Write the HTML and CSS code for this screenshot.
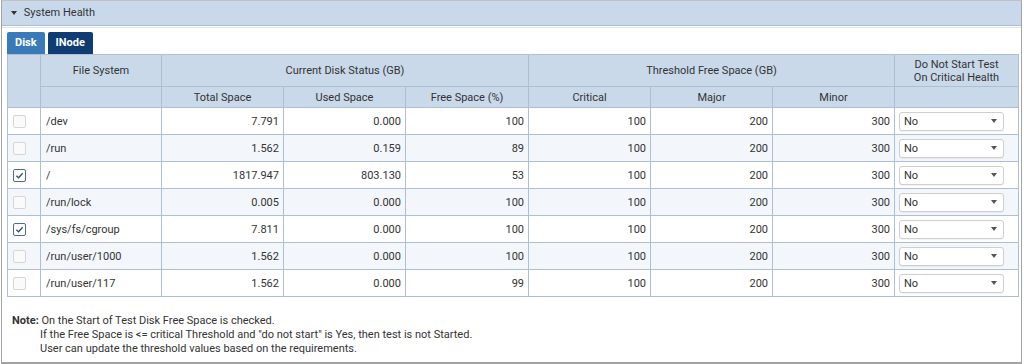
FILE: index.html
```html
<!DOCTYPE html>
<html lang="en">
<head>
  <meta charset="UTF-8">
  <title>System Health</title>
  <link rel="stylesheet" href="styles.css">
</head>
<body>

  <div class="panel">
    <div class="panel-head">
      <span class="caret"></span> System Health
    </div>

    <div class="panel-body">
      <div class="tabs">
        <div class="tab">Disk</div>
        <div class="tab activo">INode</div>
      </div>

      <table class="grid">
        <colgroup>
          <col style="width:33px">
          <col style="width:121px">
          <col style="width:122px">
          <col style="width:122px">
          <col style="width:123px">
          <col style="width:122px">
          <col style="width:122px">
          <col style="width:122px">
          <col style="width:124px">
        </colgroup>
        <thead>
          <tr class="fila-alta">
            <th rowspan="2"></th>
            <th>File System</th>
            <th colspan="3">Current Disk Status (GB)</th>
            <th colspan="3">Threshold Free Space (GB)</th>
            <th>Do Not Start Test<br>On Critical Health</th>
          </tr>
          <tr>
            <th></th>
            <th>Total Space</th>
            <th>Used Space</th>
            <th>Free Space (%)</th>
            <th>Critical</th>
            <th>Major</th>
            <th>Minor</th>
            <th></th>
          </tr>
        </thead>
        <tbody id="filas">
          <!-- rows are generated here -->
        </tbody>
      </table>

      <div class="nota">
        <b>Note:</b> On the Start of Test Disk Free Space is checked.<br>
        <span class="sangria">If the Free Space is &lt;= critical Threshold and "do not start" is Yes, then test is not Started.</span><br>
        <span class="sangria">User can update the threshold values based on the requirements.</span>
      </div>
    </div>
  </div>

  <script>
    const discos = [
      { fs: "/dev", total: "7.791", usado: "0.000", libre: 100, check: false },
      { fs: "/run", total: "1.562", usado: "0.159", libre: 89, check: false },
      { fs: "/", total: "1817.947", usado: "803.130", libre: 53, check: true },
      { fs: "/run/lock", total: "0.005", usado: "0.000", libre: 100, check: false },
      { fs: "/sys/fs/cgroup", total: "7.811", usado: "0.000", libre: 100, check: true },
      { fs: "/run/user/1000", total: "1.562", usado: "0.000", libre: 100, check: false },
      { fs: "/run/user/117", total: "1.562", usado: "0.000", libre: 99, check: false }
    ];

    const filas = document.getElementById("filas");

    discos.forEach(d => {
      const tr = document.createElement("tr");
      tr.innerHTML = `
        <td><span class="check ${d.check ? "marcado" : ""}">${d.check ? '<svg viewBox="0 0 10 10" width="9" height="9"><path d="M1.5 5.2 L4 7.5 L8.5 2.5" fill="none" stroke="#2f4f6f" stroke-width="1.4"/></svg>' : ""}</span></td>
        <td class="texto">${d.fs}</td>
        <td class="num">${d.total}</td>
        <td class="num">${d.usado}</td>
        <td class="num">${d.libre}</td>
        <td class="num">100</td>
        <td class="num">200</td>
        <td class="num">300</td>
        <td class="sel"><div class="combo"><span>No</span><span class="flecha"></span></div></td>
      `;
      filas.appendChild(tr);
    });
  </script>

</body>
</html>
```

FILE: styles.css
```css
body {
  margin: 0;
  font-family: Roboto, "Liberation Sans", sans-serif;
  font-size: 11px;
  color: #333;
  background: #fff;
}

.panel {
  margin: 0 2px 0 1px;
  border: 1px solid #a3a3a3;
  border-top: 1px solid #c0c0c0;
  border-bottom: 2px solid #a3a3a3;
  box-sizing: border-box;
  height: 364px;
}

.panel-head {
  height: 24px;
  line-height: 24px;
  padding-left: 9px;
  background: #c9d9eb;
  border-bottom: 1px solid #a8bfd8;
  font-size: 11px;
  color: #333;
}

.caret {
  display: inline-block;
  width: 0;
  height: 0;
  border-left: 3px solid transparent;
  border-right: 3px solid transparent;
  border-top: 4px solid #333;
  margin-right: 4px;
  vertical-align: 1px;
}

.panel-body {
  border-top: 1px solid #e2e2e2;
  margin-top: 1px;
  padding: 4px 5px 0 5px;
}

.tabs {
  display: flex;
  gap: 3px;
}

.tab {
  height: 22px;
  line-height: 22px;
  padding: 0 8px;
  background: #3b7ab8;
  color: #fff;
  font-weight: bold;
  font-size: 11px;
  border-radius: 2px 2px 0 0;
}

.tab.activo {
  background: #0e3c73;
}

.grid {
  width: 1011px;
  table-layout: fixed;
  border-collapse: collapse;
}

.grid th,
.grid td {
  border: 1px solid #aebfd3;
  padding: 0 5px;
  font-weight: normal;
  white-space: nowrap;
  overflow: hidden;
}

.grid th {
  background: #c9d9ea;
  height: 20px;
  text-align: center;
  color: #333;
}

.grid tr.fila-alta th {
  height: 31px;
  line-height: 13px;
}

.grid td {
  height: 26px;
}

.grid tbody tr:nth-child(even) td {
  background: #f3f7fb;
}

.grid td.texto {
  padding-left: 5px;
}

.grid td.num {
  text-align: right;
  padding-right: 4px;
}

.grid td.sel {
  padding: 0 4px;
}

.check {
  display: flex;
  align-items: center;
  justify-content: center;
  width: 11px;
  height: 11px;
  border: 1px solid #d6d6d6;
  border-radius: 2px;
  background: #fafafa;
}

.check.marcado {
  border-color: #4b6e92;
  background: #fff;
}

.combo {
  display: flex;
  align-items: center;
  justify-content: space-between;
  width: 105px;
  height: 19px;
  box-sizing: border-box;
  border: 1px solid #cfcfcf;
  border-radius: 3px;
  background: #fff;
  padding: 0 6px 0 4px;
  box-shadow: 0 1px 1px rgba(0, 0, 0, 0.05);
}

.flecha {
  width: 0;
  height: 0;
  border-left: 3px solid transparent;
  border-right: 3px solid transparent;
  border-top: 4px solid #555;
}

.nota {
  margin-top: 17px;
  padding-left: 5px;
  line-height: 14px;
  font-size: 11px;
  color: #333;
}

.sangria {
  padding-left: 28px;
}
```
